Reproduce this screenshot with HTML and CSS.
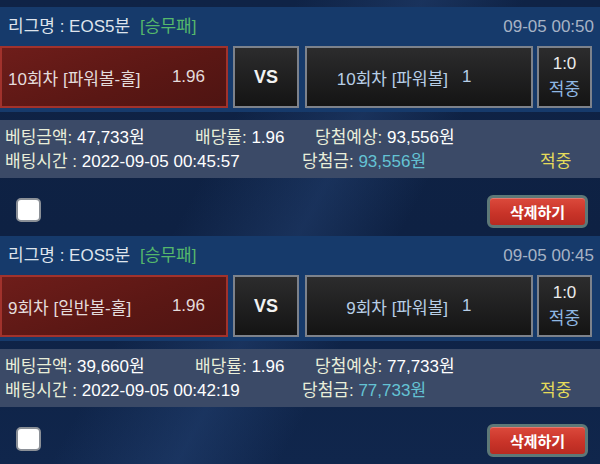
FILE: index.html
```html
<!DOCTYPE html>
<html lang="ko">
<head>
<meta charset="utf-8">
<link rel="stylesheet" href="styles.css">
</head>
<body>
<div class="page">
  <section class="ticket">
    <div class="head">
      <div class="league">리그명 : EOS5분<span class="kind">[승무패]</span></div>
      <div class="time">09-05 00:50</div>
    </div>
    <div class="match">
      <div class="box pick"><span class="name">10회차 [파워볼-홀]</span><span class="odd">1.96</span></div>
      <div class="box vs">VS</div>
      <div class="box team"><span class="tname">10회차 [파워볼]</span><span class="tnum">1</span></div>
      <div class="box score"><span class="sc">1:0</span><span class="res">적중</span></div>
    </div>
    <div class="info">
      <div class="row">
        <div class="c1"><span class="lb">베팅금액:</span> 47,733원</div>
        <div class="c2"><span class="lb">배당률:</span> 1.96</div>
        <div class="c3"><span class="lb">당첨예상:</span> 93,556원</div>
      </div>
      <div class="row">
        <div class="d1"><span class="lb">배팅시간 :</span> 2022-09-05 00:45:57</div>
        <div class="d2"><span class="lb">당첨금:</span> <span class="win">93,556원</span></div>
        <div class="d3">적중</div>
      </div>
    </div>
    <div class="actions">
      <span class="check"></span>
      <button class="del">삭제하기</button>
    </div>
  </section>
  <section class="ticket">
    <div class="head">
      <div class="league">리그명 : EOS5분<span class="kind">[승무패]</span></div>
      <div class="time">09-05 00:45</div>
    </div>
    <div class="match">
      <div class="box pick"><span class="name">9회차 [일반볼-홀]</span><span class="odd">1.96</span></div>
      <div class="box vs">VS</div>
      <div class="box team"><span class="tname">9회차 [파워볼]</span><span class="tnum">1</span></div>
      <div class="box score"><span class="sc">1:0</span><span class="res">적중</span></div>
    </div>
    <div class="info">
      <div class="row">
        <div class="c1"><span class="lb">베팅금액:</span> 39,660원</div>
        <div class="c2"><span class="lb">배당률:</span> 1.96</div>
        <div class="c3"><span class="lb">당첨예상:</span> 77,733원</div>
      </div>
      <div class="row">
        <div class="d1"><span class="lb">배팅시간 :</span> 2022-09-05 00:42:19</div>
        <div class="d2"><span class="lb">당첨금:</span> <span class="win">77,733원</span></div>
        <div class="d3">적중</div>
      </div>
    </div>
    <div class="actions">
      <span class="check"></span>
      <button class="del">삭제하기</button>
    </div>
  </section>
</div>
</body>
</html>
```
FILE: styles.css
```css
* { box-sizing: border-box; }
html, body { margin: 0; padding: 0; }
body {
  width: 600px;
  height: 464px;
  overflow: hidden;
  font-family: "Liberation Sans", "Noto Sans CJK KR", sans-serif;
  font-size: 17px;
  color: #e6e9ee;
  background:
    linear-gradient(118deg, rgba(40,70,120,0) 0%, rgba(40,70,120,0) 35%, rgba(45,80,135,0.35) 50%, rgba(40,70,120,0) 62%, rgba(40,70,120,0) 100%),
    linear-gradient(180deg, #0f2346 0%, #0e2143 50%, #10264c 100%);
}
.page { display: flex; flex-direction: column; }
.ticket { padding-top: 7px; height: 229px; }
.head {
  height: 37px;
  background: #163a6b;
  display: flex;
  align-items: center;
  justify-content: space-between;
  padding: 2px 6px 0 8px;
  line-height: 20px;
}
.league { color: #dfe4ec; }
.kind { color: #55b86b; margin-left: 10px; }
.time { color: #a7b3c5; }
.match {
  background: #163a6b;
  padding: 2px 0 4px;
  display: flex;
  height: 68px;
}
.box { height: 62px; display: flex; align-items: center; }
.pick {
  width: 228px;
  border: 2px solid #a1322c;
  background: linear-gradient(160deg, #6e1d1a 0%, #5a1714 60%, #4e1412 100%);
  color: #e4dcdc;
  justify-content: space-between;
  padding: 0 21px 0 6px;
}
.vs {
  width: 66px;
  margin-left: 5px;
  border: 2px solid #7d828b;
  background: linear-gradient(180deg, #2c2c2d 0%, #141414 100%);
  justify-content: center;
  font-weight: bold;
  font-size: 18px;
  color: #f2f2f2;
}
.team {
  width: 228px;
  margin-left: 6px;
  border: 2px solid #7d828b;
  background: linear-gradient(180deg, #2c2c2d 0%, #141414 100%);
  color: #b7cee6;
}
.tname { width: 141px; text-align: right; }
.tnum { margin-left: 14px; }
.score {
  width: 55px;
  margin-left: 4px;
  border: 2px solid #7d828b;
  background: linear-gradient(180deg, #2c2c2d 0%, #141414 100%);
  flex-direction: column;
  justify-content: center;
  line-height: 26px;
}
.sc { color: #ececec; }
.res { color: #8fb8e4; }
.info {
  margin-top: 8px;
  height: 58px;
  background: #3b4a67;
  padding-top: 6px;
  line-height: 24px;
  color: #ffffff;
}
.row { display: flex; white-space: nowrap; }
.lb { color: #e9eed9; }
.c1 { width: 195px; padding-left: 5px; }
.c2 { width: 120px; }
.c3 { }
.d1 { width: 302px; padding-left: 5px; }
.d2 { width: 238px; }
.d3 { color: #e6dc5a; }
.win { color: #64c3d4; }
.actions {
  height: 51px;
  display: flex;
  justify-content: space-between;
  align-items: flex-start;
  padding: 0 12px 0 16px;
}
.check {
  margin-top: 20px;
  width: 25px;
  height: 24px;
  border-radius: 5px;
  background: #ffffff;
  border: 2px solid #8b9097;
}
.del {
  margin-top: 17px;
  width: 101px;
  height: 33px;
  border-radius: 6px;
  border: 3px solid #5d7877;
  background: linear-gradient(180deg, #dc4a3c 0%, #c93429 55%, #b82a21 100%);
  color: #ffffff;
  font-family: "Noto Sans CJK KR", sans-serif;
  font-weight: bold;
  font-size: 15px;
  padding: 0;
  line-height: 26px;
  box-shadow: inset 0 1px 0 rgba(255,255,255,0.25);
}
```
